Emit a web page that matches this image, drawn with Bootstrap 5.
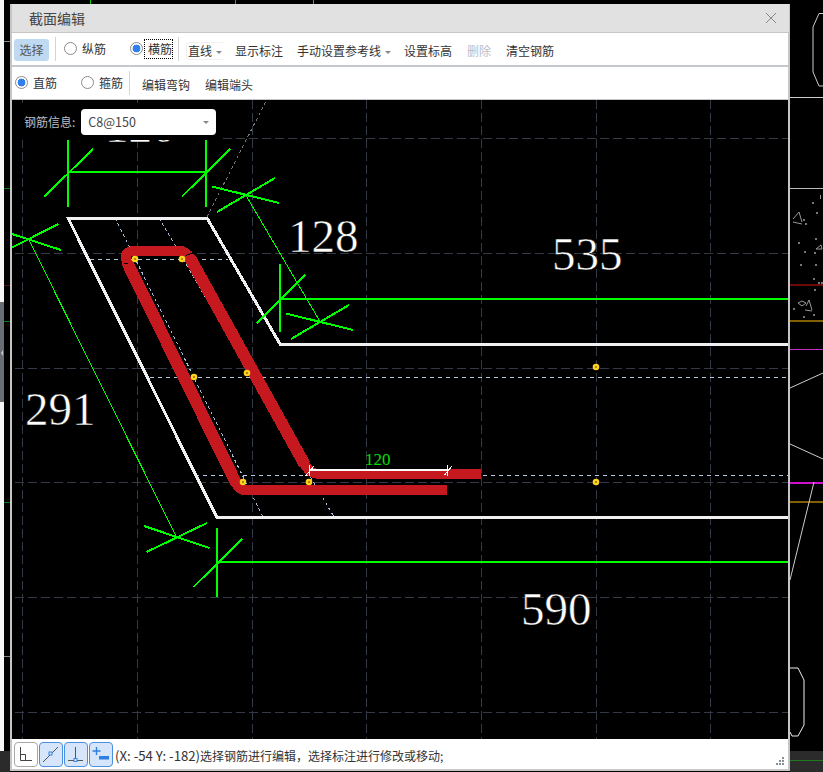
<!DOCTYPE html>
<html lang="zh-CN">
<head>
    <meta charset="UTF-8">
    <meta name="viewport" content="width=device-width, initial-scale=1.0">
    <title>截面编辑</title>
    <link href="https://cdn.jsdelivr.net/npm/bootstrap@5.3.0/dist/css/bootstrap.min.css" rel="stylesheet">
    <style>
        body { background: #000; overflow: hidden; font: 12px/1.2 "Noto Sans CJK SC", "Liberation Sans", sans-serif; color: #333; }
        .desk { position: absolute; left: 0; top: 0; display: block; }

        /* dialog */
        .sec-window { position: absolute; left: 10px; top: 4px; width: 780px; height: 767px; border: 2px solid #c6c6c6; border-top: 0; background: #fff; }
        .sec-title { height: 29px; flex: none; background: #e1e1e1; border-bottom: 1px solid #c6c6c6; padding: 0 13px 0 17px; font-size: 14px; color: #444; margin: 0 -1px 0 0; }
        .sec-close { width: 10px; height: 10px; display: block; }
        .tool-row { height: 34px; flex: none; border-bottom: 2px solid #c5c9cf; background: #fff; }
        .tool-row-last { height: 33px; border-bottom: 1px solid #c5c5c5; padding-left: 3px; }
        .tool-row-first { padding-left: 2px; }

        .pick-btn { width: 35px; height: 22px; margin-top: 2px; padding: 0; border: 0; border-radius: 3px; background: #bfd9f2; color: #555; font-size: 12px; line-height: 22px; }
        .tool-sep { width: 1px; height: 24px; background: #d4d4d4; margin-left: 6px; flex: none; }
        .tool-btn { padding: 0 7px; margin-top: 4px; border: 0; border-radius: 0; background: none; color: #333; font-size: 12px; line-height: 16px; }
        .tool-btn.dropdown-toggle { padding-right: 6px; }
        .tool-btn.disabled-look { color: #b9bdc7; margin: 4px 1px 0; }
        .nudge { margin-left: 1px; }
        .first-edit { margin-left: 5px; }
        .line-pick { width: 39px; height: 18px; margin: 3px 3px 0 7px; padding: 0 0 0 1px; border: 1px solid #f0f0f0; border-right: 0; border-radius: 4px; background: #fff; color: #333; font-size: 12px; line-height: 16px; text-align: left; }
        .dropdown-toggle::after { margin-left: 4px; vertical-align: 2px; border-top: 3px solid #888; border-right: 3px solid transparent; border-left: 3px solid transparent; border-bottom: 0; }

        .radio-item { display: flex; align-items: center; color: #333; gap: 5px; line-height: 16px; margin-left: 8px; margin-bottom: 1px; }
        .radio-item.wide { margin-left: 24px; }
        .radio-item.flush { margin-left: 0; }
        .radio-item .form-check-input { width: 13px; height: 13px; margin: 0; border: 1px solid #8b8b8b; background-image: none; background-color: #fff; box-shadow: none; flex: none; }
        .radio-item .form-check-input:checked { border-color: #8b8b8b; background-color: #fff; background-image: radial-gradient(circle at center, #2f80ed 0, #2f80ed 3.6px, transparent 4.2px); }
        .radio-focus { outline: 1px dotted #000; outline-offset: 0; padding: 1px 0 1px 3px; margin-left: -3px; }

        /* drawing area */
        .sec-canvas { flex: 1 1 auto; min-height: 0; background: #000; overflow: hidden; }
        .sec-canvas svg { display: block; }
        .rebar-info { position: absolute; left: 0; top: 3px; width: 208px; height: 37px; padding: 6px 0 0 12px; gap: 6px; background: #000; color: #b9bec6; font-size: 12px; line-height: 26px; }
        .combo-btn { width: 135px; height: 26px; padding: 0 7px; border: 0; border-radius: 4px; background: #fff; color: #444; font-size: 12.5px; }
        .combo-btn:hover, .combo-btn:active { background: #fff; color: #444; }
        .dim-big { font-family: "Liberation Serif", serif; font-size: 47px; fill: #fff; stroke: #000; stroke-width: 0.5px; }
        .dim-small { font-family: "Liberation Serif", serif; font-size: 17px; fill: #00e000; }

        /* status bar */
        .sec-status { height: 30px; flex: none; padding: 3px 3px 0 2px; gap: 1px; background: #fff; }
        .snap-btn { width: 24px; height: 25px; padding: 0; border: 1px solid #4a90e2; border-radius: 4px; background: #d6e5fa; flex: none; }
        .snap-btn.off { border-color: #a8a8a8; background: #fff; }
        .snap-btn svg { display: block; width: 22px; height: 23px; }
        .status-text { color: #333; white-space: nowrap; font-size: 12px; margin-left: 1px; }
        .coord-text { font-size: 13.2px; }
        .grip { width: 9px; height: 9px; margin-top: 15px; margin-right: 0; flex: none; }
    </style>
</head>
<body>
    <!-- the drawing behind the dialog -->
    <svg class="desk" width="823" height="772" viewBox="0 0 823 772">
        <rect x="0" y="0" width="4" height="751" fill="#f6f6f6"/>
        <rect x="0" y="302" width="4" height="100" fill="#686d76"/>
        <path d="M3 350 L1 353 L3 356 Z" fill="#c8c8c8"/>
        <rect x="0" y="751" width="10" height="21" fill="#2b2b2b"/>
        <rect x="790" y="751" width="33" height="21" fill="#2b2b2b"/>
        <rect x="790" y="760" width="33" height="1" fill="#1f7a1f"/>
        <g shape-rendering="crispEdges">
            <rect x="4" y="41" width="6" height="1" fill="#888"/>
            <rect x="4" y="188" width="6" height="1" fill="#0a7a0a"/>
            <rect x="4" y="285" width="6" height="1" fill="#5a0a0a"/>
            <rect x="4" y="321" width="6" height="1" fill="#0a7a0a"/>
            <rect x="4" y="502" width="6" height="1" fill="#0a7a0a"/>
            <rect x="4" y="656" width="6" height="1" fill="#888"/>
            <rect x="90" y="0" width="1" height="4" fill="#0c0"/>
            <rect x="235" y="0" width="1" height="4" fill="#0c0"/>
            <rect x="313" y="0" width="1" height="4" fill="#0c0"/>
            <rect x="790" y="97" width="33" height="1" fill="#ccc"/>
            <rect x="790" y="188" width="33" height="1" fill="#bbb"/>
            <rect x="790" y="284" width="33" height="2" fill="#6a0a0a"/>
            <rect x="790" y="320" width="33" height="2" fill="#806000"/>
            <rect x="790" y="349" width="33" height="1" fill="#c030c0"/>
            <rect x="790" y="482" width="33" height="2" fill="#d010d0"/>
            <rect x="790" y="501" width="33" height="2" fill="#806000"/>
        </g>
        <g fill="none" stroke="#ccc" stroke-width="1">
            <path d="M823 13.5 H819 L813 27 V72 L819 86 H823"/>
            <path d="M790 388 L823 373"/>
            <path d="M790 444 L823 459"/>
            <path d="M790 580 L814 482"/>
            <path d="M790 668 H798 L804 680 V725 L798 736 H792 L790 732" stroke="#eee"/>
            <path d="M793 219 L799 212 L802 222 M793 222 L802 224 M820.5 195 V199 M816 249 L821 245 L822 249 Z M798 303 L802 306 L806 303 L802 301 Z M806 306 L809 300 L812 310 M805 310 L812 311" stroke="#999"/>
        </g>
        <g fill="#777">
            <rect x="812" y="202" width="2" height="2"/><rect x="816" y="212" width="2" height="2"/>
            <rect x="803" y="219" width="2" height="2"/><rect x="805" y="223" width="2" height="2"/>
            <rect x="798" y="242" width="2" height="2"/><rect x="815" y="238" width="2" height="2"/>
            <rect x="804" y="251" width="2" height="2"/><rect x="814" y="252" width="2" height="2"/>
            <rect x="800" y="264" width="2" height="2"/><rect x="815" y="264" width="2" height="2"/>
            <rect x="813" y="278" width="2" height="2"/><rect x="818" y="282" width="2" height="2"/>
            <rect x="821" y="282" width="2" height="2"/><rect x="814" y="289" width="2" height="2"/>
            <rect x="793" y="308" width="2" height="2"/><rect x="803" y="316" width="2" height="2"/>
            <rect x="813" y="314" width="2" height="2"/>
        </g>
    </svg>

    <div class="sec-window d-flex flex-column">
        <div class="sec-title d-flex align-items-center justify-content-between">
            <span>截面编辑</span>
            <svg class="sec-close" viewBox="0 0 10 10"><path d="M0 0 L10 10 M10 0 L0 10" stroke="#888" stroke-width="1" fill="none"/></svg>
        </div>

        <!-- 工具栏 -->
        <div class="tool-row tool-row-first d-flex align-items-center">
            <button type="button" class="btn pick-btn">选择</button>
            <span class="tool-sep"></span>
            <label class="radio-item"><input class="form-check-input" type="radio" name="dir"><span>纵筋</span></label>
            <label class="radio-item wide"><input class="form-check-input" type="radio" name="dir" checked><span class="radio-focus">横筋</span></label>
            <span class="tool-sep"></span>
            <button type="button" class="btn line-pick dropdown-toggle">直线</button>
            <button type="button" class="btn tool-btn">显示标注</button>
            <button type="button" class="btn tool-btn dropdown-toggle">手动设置参考线</button>
            <button type="button" class="btn tool-btn">设置标高</button>
            <button type="button" class="btn tool-btn disabled-look">删除</button>
            <button type="button" class="btn tool-btn">清空钢筋</button>
        </div>

        <div class="tool-row tool-row-last d-flex align-items-center">
            <label class="radio-item flush"><input class="form-check-input" type="radio" name="kind" checked><span>直筋</span></label>
            <label class="radio-item wide"><input class="form-check-input" type="radio" name="kind"><span>箍筋</span></label>
            <span class="tool-sep"></span>
            <button type="button" class="btn tool-btn first-edit">编辑弯钩</button>
            <button type="button" class="btn tool-btn nudge">编辑端头</button>
        </div>

        <!-- 画布 -->
        <div class="sec-canvas position-relative">
            <svg width="776" height="639" viewBox="12 100 776 639" shape-rendering="crispEdges">
                <g stroke="#343a45" stroke-width="1" stroke-dasharray="9 4" fill="none">
                    <path d="M22.5 100 V739 M137.5 100 V739 M252.5 100 V739 M366.5 100 V739 M481.5 100 V739 M596.5 100 V739 M710.5 100 V739"/>
                    <path d="M15 138.5 H788 M15 253.5 H788 M15 368.5 H788 M15 482.5 H788 M15 597.5 H788 M15 712.5 H788"/>
                </g>

                <!-- reference lines -->
                <g stroke="#b8c8e0" stroke-width="1" stroke-dasharray="4 4" fill="none">
                    <path d="M90 259.5 H228 M150 377.5 H788 M195 475.5 H788"/>
                </g>
                <g stroke="#a8bcd8" stroke-width="1" stroke-dasharray="3 3" fill="none">
                    <path d="M115 218 L263 517 M159 218 L334 517"/>
                </g>
                <path d="M207 217 L266 101" stroke="#777" stroke-width="1" stroke-dasharray="3 3" fill="none"/>

                <!-- section outline -->
                <path d="M789 344 H280 L207 218 H68 L217 517.5 H789" stroke="#f0f0f0" stroke-width="3" fill="none"/>

                <!-- dimensions -->
                <g stroke="#00ff00" stroke-width="2" fill="none">
                    <path d="M68 140 V207 M206 140 V207 M68 172 H206 M44.5 196.5 L93 149 M182 196.5 L230 149"/>
                    <path d="M212 186.5 L279 203 M217 212 L275 178"/>
                    <path d="M286 313.5 L353 330 M291 339 L349 305"/>
                    <path d="M280 264 V332 M280 299 H788 M256.5 323.5 L305 275"/>
                    <path d="M12 234 L61 250 M12 247.5 L58.5 224"/>
                    <path d="M144 526 L209.5 548 M146.5 552 L207 523"/>
                    <path d="M217 528 V597 M217 562 H788 M193.5 587 L242 539"/>
                </g>
                <g stroke="#00ff00" stroke-width="1" fill="none">
                    <path d="M246 195.5 L320 321.5"/>
                    <path d="M29 240 L176 536"/>
                </g>

                <!-- rebar -->
                <path d="M447 490 H245 Q239 490 236.5 484 L127 262 Q122 251 135 251 H180 Q186 251 190 258 L305 465 Q310 474 320 474 H481" stroke="#c5181f" stroke-width="10" fill="none"/>
                <path d="M236.5 484 L127 262 M190 258 L305 465" stroke="#c5181f" stroke-width="12" fill="none"/>
                <path d="M124 263.5 L128.5 263 M186 255.5 L192.5 253" stroke="#000" stroke-width="1" fill="none"/>

                <!-- dimension on the bar -->
                <path d="M310 470 H447" stroke="#fff" stroke-width="2" fill="none"/>
                <path d="M309.5 465 V476 M447.5 465 V476 M305.5 476 L314 466 M444.5 475 L452 466" stroke="#fff" stroke-width="1" fill="none"/>

                <!-- points -->
                <g fill="#ffd21f" stroke="none" shape-rendering="geometricPrecision">
                    <circle cx="135" cy="259" r="3.3"/><circle cx="182" cy="259" r="3.3"/>
                    <circle cx="194" cy="377" r="3.3"/><circle cx="247" cy="373" r="3.3"/>
                    <circle cx="243" cy="482" r="3.3"/><circle cx="309" cy="482" r="3.3"/>
                    <circle cx="596" cy="367" r="3.3"/><circle cx="596" cy="482" r="3.3"/>
                </g>
                <g fill="#b08a10">
                    <rect x="134" y="258" width="2" height="2"/><rect x="181" y="258" width="2" height="2"/>
                    <rect x="193" y="376" width="2" height="2"/><rect x="246" y="372" width="2" height="2"/>
                    <rect x="242" y="481" width="2" height="2"/><rect x="308" y="481" width="2" height="2"/>
                    <rect x="595" y="366" width="2" height="2"/><rect x="595" y="481" width="2" height="2"/>
                </g>

                <text class="dim-big" x="105" y="142">120</text>
                <text class="dim-big" x="288" y="252">128</text>
                <text class="dim-big" x="552" y="270">535</text>
                <text class="dim-big" x="25" y="425">291</text>
                <text class="dim-big" x="521" y="625">590</text>
                <text class="dim-small" x="365" y="465">120</text>
            </svg>

            <div class="rebar-info d-flex align-items-start">
                <span>钢筋信息:</span>
                <button type="button" class="btn combo-btn dropdown-toggle d-flex align-items-center justify-content-between">C8@150</button>
            </div>
        </div>

        <!-- 状态栏 -->
        <div class="sec-status d-flex align-items-start">
            <button type="button" class="btn snap-btn off">
                <svg viewBox="0 0 22 23"><path d="M5.5 4 V17.5 H17 M5.5 11.5 H10.5 V17.5" stroke="#444" stroke-width="1" fill="none"/></svg>
            </button>
            <button type="button" class="btn snap-btn">
                <svg viewBox="0 0 22 23"><path d="M3 19 L18 4" stroke="#555" stroke-width="1" fill="none"/><rect x="9" y="9" width="3" height="3" fill="#d6e5fa" stroke="#3b86e0"/></svg>
            </button>
            <button type="button" class="btn snap-btn">
                <svg viewBox="0 0 22 23"><path d="M10.5 4 V16 M3 17.5 H18" stroke="#555" stroke-width="1" fill="none"/><rect x="9" y="15.5" width="3" height="3" fill="#d6e5fa" stroke="#3b86e0"/></svg>
            </button>
            <button type="button" class="btn snap-btn">
                <svg viewBox="0 0 22 23"><path d="M6.5 4 V12 M2.5 8 H10.5" stroke="#2f7fe0" stroke-width="1.4" fill="none"/><rect x="9" y="13" width="10" height="3.5" fill="#2f7fe0"/></svg>
            </button>
            <span class="status-text align-self-center"><span class="coord-text">(X: -54 Y: -182)</span>选择钢筋进行编辑，选择标注进行修改或移动;</span>
            <svg class="grip ms-auto" viewBox="0 0 9 9" fill="#8a8f96">
                <rect x="6" y="0" width="2" height="2"/>
                <rect x="3" y="3" width="2" height="2"/><rect x="6" y="3" width="2" height="2"/>
                <rect x="0" y="6" width="2" height="2"/><rect x="3" y="6" width="2" height="2"/><rect x="6" y="6" width="2" height="2"/>
            </svg>
        </div>
    </div>

    <script src="https://cdn.jsdelivr.net/npm/bootstrap@5.3.0/dist/js/bootstrap.bundle.min.js"></script>
</body>
</html>
